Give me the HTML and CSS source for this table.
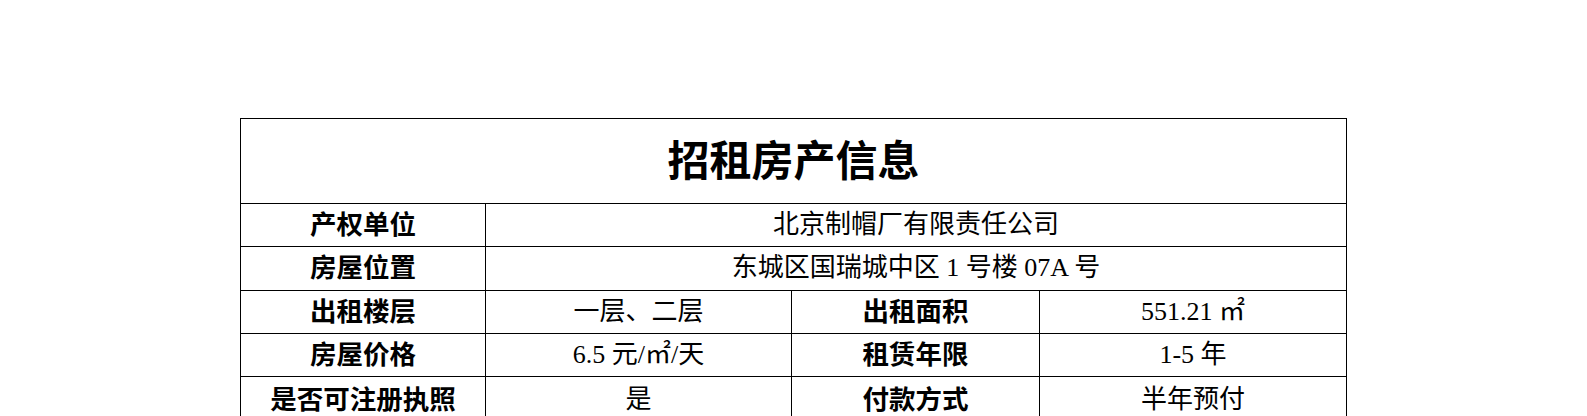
FILE: index.html
```html
<!DOCTYPE html>
<html lang="zh-CN">
<head>
<meta charset="utf-8">
<title>招租房产信息</title>
<link rel="stylesheet" href="styles.css">
</head>
<body>
<div class="page">
  <table class="info">
    <colgroup>
      <col class="c1"><col class="c2"><col class="c3"><col class="c4">
    </colgroup>
    <tr class="title-row"><th colspan="4" class="title">招租房产信息</th></tr>
    <tr><th>产权单位</th><td colspan="3">北京制帽厂有限责任公司</td></tr>
    <tr><th>房屋位置</th><td colspan="3">东城区国瑞城中区 1 号楼 07A 号</td></tr>
    <tr><th>出租楼层</th><td>一层、二层</td><th>出租面积</th><td>551.21 ㎡</td></tr>
    <tr><th>房屋价格</th><td>6.5 元/㎡/天</td><th>租赁年限</th><td>1-5 年</td></tr>
    <tr class="last"><th>是否可注册执照</th><td>是</td><th>付款方式</th><td>半年预付</td></tr>
  </table>
</div>
</body>
</html>
```

FILE: styles.css
```css
html, body {
  margin: 0;
  padding: 0;
  background: #ffffff;
  overflow: hidden;
}
.page {
  padding: 118px 0 0 240px;
}
.info {
  border-collapse: collapse;
  table-layout: fixed;
  width: 1106px;
  color: #000;
  font-family: "Liberation Serif", "Noto Sans CJK SC", serif;
}
.c1 { width: 245px; }
.c2 { width: 306px; }
.c3 { width: 248px; }
.c4 { width: 307px; }
.info th, .info td {
  border: 1px solid #000;
  padding: 0;
  text-align: center;
  vertical-align: middle;
  line-height: 1;
  white-space: nowrap;
}
.info td {
  height: 42.33px;
  font-size: 26px;
  font-weight: 400;
}
.info th {
  height: 38.33px;
  padding-bottom: 4px;
  font-family: "Noto Sans CJK SC", sans-serif;
  font-weight: 700;
  font-size: 26.5px;
}
.info th.title {
  height: 78px;
  padding-bottom: 6px;
  font-size: 42px;
  font-weight: 700;
}
.info tr.last td {
  height: 46px;
}
.info tr.last th {
  height: 42px;
}
```
